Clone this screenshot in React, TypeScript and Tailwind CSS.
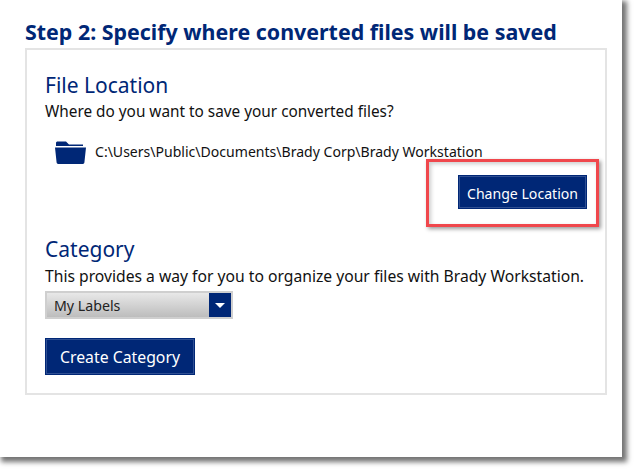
export default function App() {
  const font = { fontFamily: '"Noto Sans", sans-serif' };
  return (
    <div className="w-[637px] h-[472px] bg-white overflow-hidden" style={font}>
      <div className="w-[622px] h-[457px] bg-white shadow-[3px_3px_5px_2px_rgba(0,0,0,0.55)] pl-[25px] pt-[16px] flex flex-col">
        <h1 className="h-[32px] text-[21.4px] leading-[32px] font-bold text-[#002776] whitespace-nowrap">
          Step 2: Specify where converted files will be saved
        </h1>
        <div className="w-[582px] h-[347px] border-2 border-[#e4e4e4] pl-[18px] pt-[21px] flex flex-col">
          <h2 className="h-[29px] text-[21px] leading-[29px] text-[#002776]">File Location</h2>
          <p className="h-[22px] text-[15.35px] leading-[22px] text-[#111] whitespace-nowrap">Where do you want to save your converted files?</p>
          <div className="flex items-center mt-[18px] h-[24px] pl-[9px]">
            <svg width="33" height="25" viewBox="0 0 33 25" className="mr-[8px]">
              <path d="M3 1.5h9l3 3h14v1.6H2V2.5z" fill="#002776" />
              <path d="M1 7.5h31l-1.6 15a1.5 1.5 0 0 1-1.5 1.4H4.1a1.5 1.5 0 0 1-1.5-1.4z" fill="#002776" />
            </svg>
            <span className="text-[14.06px] text-[#111] whitespace-nowrap">C:\Users\Public\Documents\Brady Corp\Brady Workstation</span>
          </div>
          <div className="relative flex justify-end mt-[11px] pr-[18px]">
            <button className="w-[129px] h-[34px] pt-[3px] bg-[#002776] border border-[#002776] outline outline-1 outline-offset-[-2px] outline-[#2f4f92] text-white text-[14.1px]">
              Change Location
            </button>
            <div className="absolute left-[381px] top-[-16px] w-[173px] h-[68px] border-[3px] border-[#f0474c] shadow-[2px_2px_4px_rgba(0,0,0,0.4),inset_2px_2px_4px_rgba(0,0,0,0.2)]" />
          </div>
          <h2 className="h-[29px] mt-[26px] text-[21px] leading-[29px] text-[#002776]">Category</h2>
          <p className="h-[23px] pt-[1px] text-[15.68px] leading-[22px] text-[#111] whitespace-nowrap">This provides a way for you to organize your files with Brady Workstation.</p>
          <div className="mt-[4px] w-[188px] h-[28px] border-2 border-[#cfcfcf] bg-gradient-to-b from-[#e8e8e8] to-[#bdbdbd] flex items-center justify-between">
            <span className="pl-[7px] pt-[2px] text-[14.2px] text-[#222]">My Labels</span>
            <span className="w-[22px] h-full bg-[#002776] flex items-center justify-center">
              <span className="w-0 h-0 border-x-[5px] border-x-transparent border-t-[5px] border-t-white" />
            </span>
          </div>
          <button className="mt-[19px] w-[150px] h-[37px] pt-[3px] bg-[#002776] outline outline-1 outline-offset-[-2px] outline-[#2f4f92] text-white text-[15.8px]">
            Create Category
          </button>
        </div>
      </div>
    </div>
  );
}
